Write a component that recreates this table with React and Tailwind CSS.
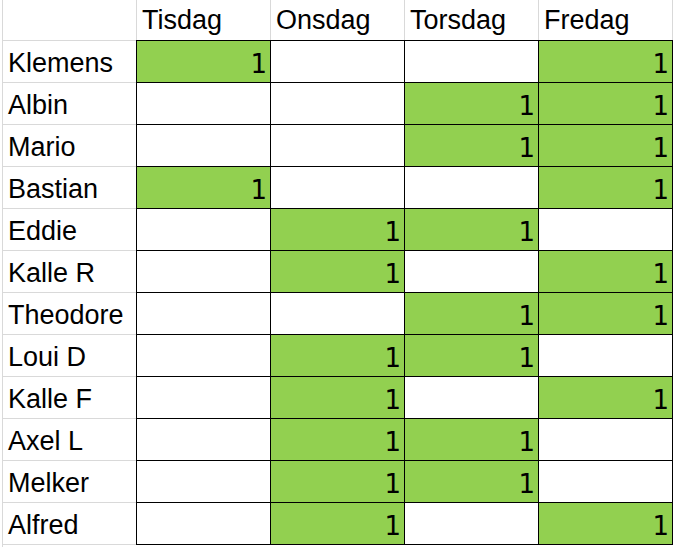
import React from "react";

const days = ["Tisdag", "Onsdag", "Torsdag", "Fredag"];

const rows = [
  ["Klemens", [1, 0, 0, 1]],
  ["Albin", [0, 0, 1, 1]],
  ["Mario", [0, 0, 1, 1]],
  ["Bastian", [1, 0, 0, 1]],
  ["Eddie", [0, 1, 1, 0]],
  ["Kalle R", [0, 1, 0, 1]],
  ["Theodore", [0, 0, 1, 1]],
  ["Loui D", [0, 1, 1, 0]],
  ["Kalle F", [0, 1, 0, 1]],
  ["Axel L", [0, 1, 1, 0]],
  ["Melker", [0, 1, 1, 0]],
  ["Alfred", [0, 1, 0, 1]],
];

const App = () => {
  return (
    <div className="w-[676px] h-[547px] bg-white overflow-hidden text-black font-['Liberation_Sans',Arial,sans-serif] text-[27px] leading-none">
      <div className="ml-[2px] border-l border-[#d9d9d9] h-full">
        {/* header */}
        <div className="flex h-[40px]">
          <div className="w-[133px]" />
          {days.map((d, i) => (
            <div
              key={d}
              className={`flex items-end pb-[6px] pl-[5px] border-l border-[#d9d9d9] ${
                i === 3 ? "w-[135px] border-r" : "w-[134px]"
              }`}
            >
              {d}
            </div>
          ))}
        </div>

        {rows.map(([name, vals], r) => {
          const last = r === rows.length - 1;
          return (
            <div key={name} className={`flex ${last ? "h-[43px]" : "h-[42px]"}`}>
              <div
                className={`w-[133px] flex items-end pb-[5px] pl-[5px] border-t border-[#d9d9d9] ${
                  last ? "border-b" : ""
                }`}
              >
                {name}
              </div>
              {vals.map((v, i) => (
                <div
                  key={i}
                  className={`flex items-end justify-end pb-[5px] pr-[3px] border-l border-t border-black font-['DejaVu_Sans',sans-serif] text-[26px] ${
                    v ? "bg-[#92d050]" : "bg-white"
                  } ${i === 3 ? "w-[135px] border-r" : "w-[134px]"} ${
                    last ? "border-b" : ""
                  }`}
                >
                  {v ? "1" : ""}
                </div>
              ))}
            </div>
          );
        })}
      </div>
    </div>
  );
};

export default App;
